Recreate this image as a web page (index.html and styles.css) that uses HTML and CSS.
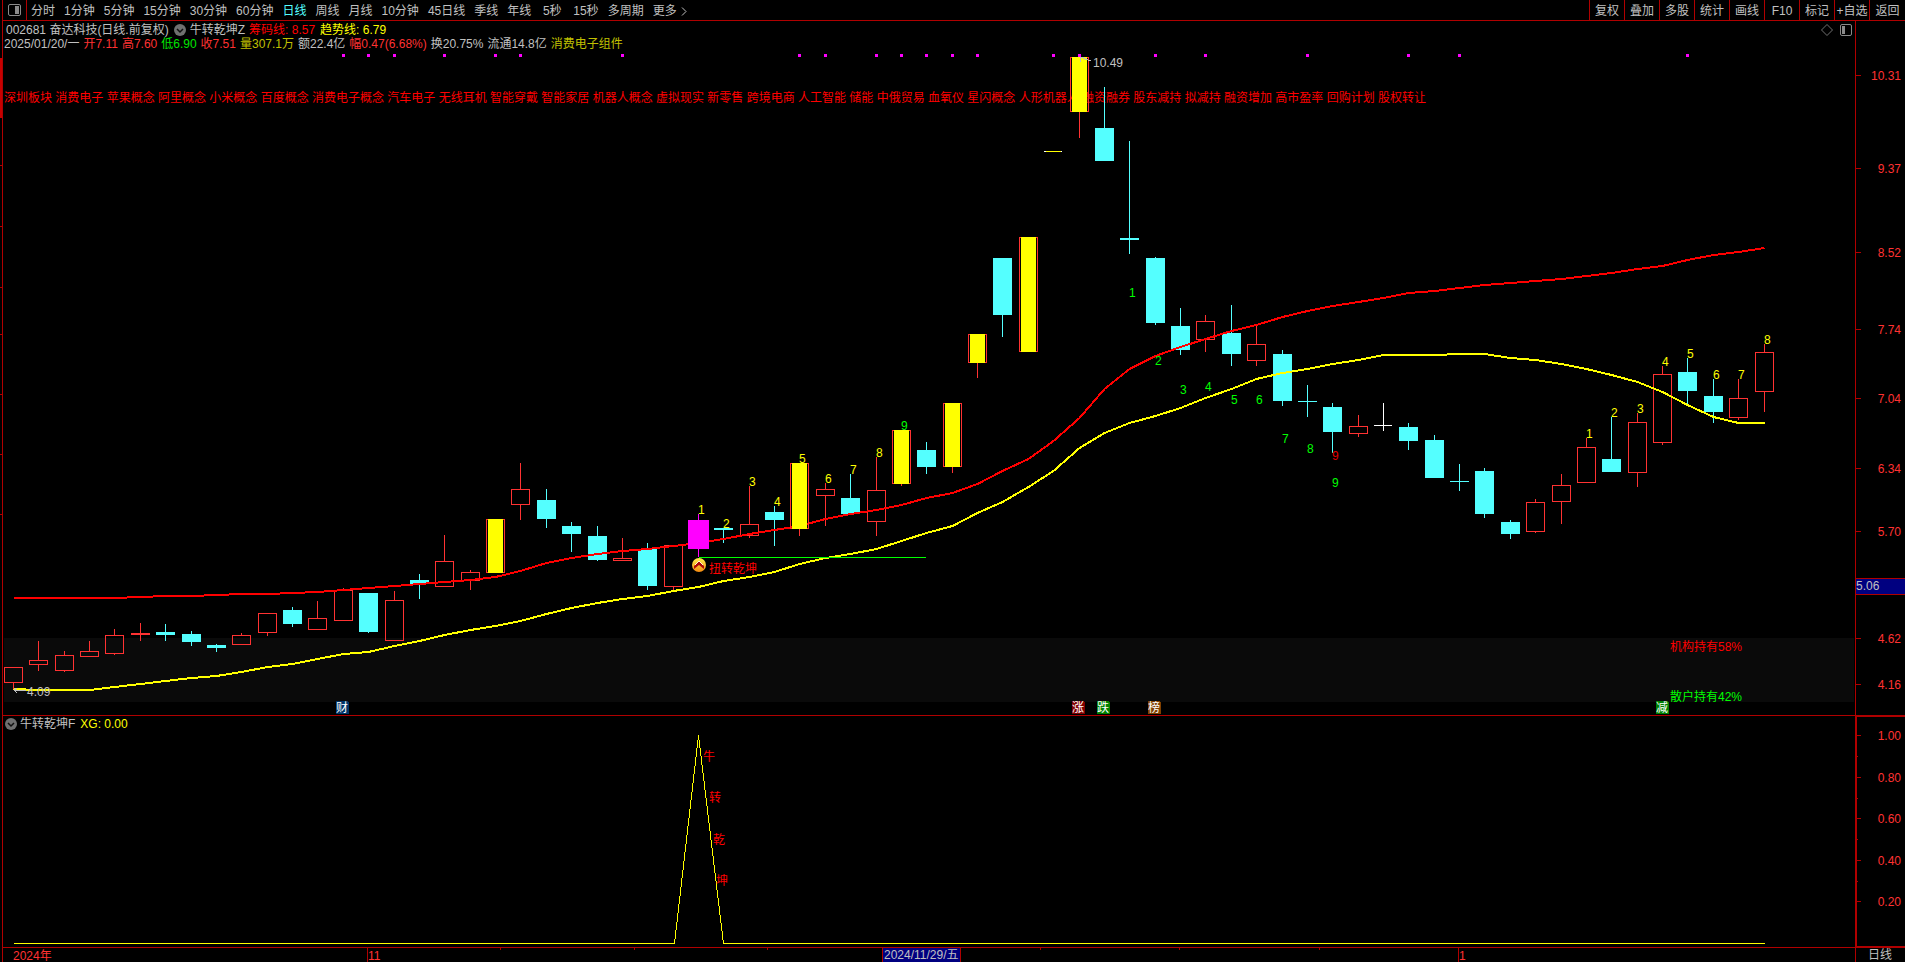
FILE: index.html
```html
<!DOCTYPE html>
<html lang="zh-CN">
<head>
<meta charset="utf-8">
<title>奋达科技 日线</title>
<link rel="stylesheet" href="styles.css">
</head>
<body>
<div class="app">
  <aside class="rail"><svg class="plot" id="rail"></svg></aside>

  <header class="toolbar">
    <button class="layout-btn" aria-label="布局">
      <svg width="13" height="12" viewBox="0 0 13 12"><rect x="0.5" y="0.5" width="12" height="11" rx="1.5" fill="none" stroke="#8a8a8a"/><rect x="7" y="2" width="4" height="8" fill="#8a8a8a"/></svg>
    </button>
    <nav class="periods">
      <button>分时</button><button>1分钟</button><button>5分钟</button><button>15分钟</button><button>30分钟</button><button>60分钟</button><button class="active">日线</button><button>周线</button><button>月线</button><button>10分钟</button><button>45日线</button><button>季线</button><button>年线</button><button>5秒</button><button>15秒</button><button>多周期</button><button class="more">更多<svg width="6" height="9" viewBox="0 0 6 9"><path d="M1 0.5L5 4.5L1 8.5" fill="none" stroke="#c0c0c0"/></svg></button>
    </nav>
    <div class="actions">
      <button>复权</button><button>叠加</button><button>多股</button><button>统计</button><button>画线</button><button>F10</button><button>标记</button><button>+自选</button><button>返回</button>
    </div>
  </header>

  <main class="panel price">
    <svg class="plot" id="price"></svg>
    <div class="legend">
      <div class="row row-title">
        <span>002681 奋达科技(日线.前复权)</span>
        <button class="fold" aria-label="指标菜单"><svg width="12" height="12" viewBox="0 0 12 12"><circle cx="6" cy="6" r="6" fill="#707070"/><path d="M3 5L6 8L9 5" fill="none" stroke="#101010" stroke-width="1.5"/></svg></button>
        <span class="name">牛转乾坤Z</span>
        <span class="red">筹码线: 8.57</span>
        <span class="yellow">趋势线: 6.79</span>
        <div class="tools">
          <button aria-label="标记"><svg width="12" height="12" viewBox="0 0 12 12"><path d="M6 0.5L11.5 6L6 11.5L0.5 6Z" fill="none" stroke="#707070"/></svg></button>
          <button aria-label="侧栏"><svg width="12" height="12" viewBox="0 0 12 12"><rect x="0.5" y="0.5" width="11" height="11" rx="1.5" fill="none" stroke="#8a8a8a"/><rect x="2" y="2" width="3" height="8" fill="#8a8a8a"/></svg></button>
        </div>
      </div>
      <div class="row row-quote">
        <span>2025/01/20/一</span>
        <span class="up">开7.11</span>
        <span class="up">高7.60</span>
        <span class="down">低6.90</span>
        <span class="up">收7.51</span>
        <span class="olive">量307.1万</span>
        <span>额22.4亿</span>
        <span class="up">幅0.47(6.68%)</span>
        <span>换20.75%</span>
        <span>流通14.8亿</span>
        <span class="olive">消费电子组件</span>
      </div>
    </div>
  </main>
  <aside class="axis price-axis"><svg class="plot" id="priceAxis"></svg></aside>

  <section class="panel signal">
    <svg class="plot" id="signal"></svg>
    <div class="legend">
      <div class="row row-signal">
        <button class="fold" aria-label="指标菜单"><svg width="12" height="12" viewBox="0 0 12 12"><circle cx="6" cy="6" r="6" fill="#707070"/><path d="M3 5L6 8L9 5" fill="none" stroke="#101010" stroke-width="1.5"/></svg></button>
        <span>牛转乾坤F</span>
        <span class="yellow value">XG: 0.00</span>
      </div>
    </div>
  </section>
  <aside class="axis signal-axis"><svg class="plot" id="signalAxis"></svg></aside>

  <footer class="dates"><svg class="plot" id="dates"></svg></footer>
  <div class="period-label">日线</div>
</div>
<script src="script.js"></script>
</body>
</html>
```

FILE: styles.css
```css
* { box-sizing: border-box; }

body {
  margin: 0;
  background: #000;
  color: #c0c0c0;
  font: 12px/14px "Liberation Sans", "Noto Sans CJK SC", sans-serif;
}

button {
  margin: 0;
  padding: 0;
  border: 0;
  background: none;
  color: inherit;
  font: inherit;
  cursor: pointer;
  white-space: nowrap;
}

svg { display: block; }

.app {
  display: grid;
  grid-template-columns: 3px minmax(0, 1fr) 50px;
  grid-template-rows: 21px minmax(0, 694fr) minmax(0, 232fr) 15px;
  height: 100vh;
  overflow: hidden;
}

.rail {
  grid-row: 1 / -1;
  border-right: 1px solid #b00000;
}

.toolbar {
  grid-column: 2 / -1;
  display: flex;
  align-items: stretch;
  border-bottom: 1px solid #b00000;
}

.layout-btn {
  width: 24px;
  padding-left: 5px;
  border-right: 1px solid #b00000;
}

.periods {
  display: flex;
  gap: 9px;
  padding-left: 4px;
}

.periods button { min-width: 24px; padding-top: 2px; }
.periods .active { color: #54ffff; }
.periods .more { display: flex; align-items: center; gap: 4px; }

.actions {
  display: flex;
  margin-left: auto;
}

.actions button {
  width: 35px;
  padding-top: 2px;
  border-left: 1px solid #b00000;
}

.actions button:last-child { width: 36px; }

.panel {
  display: grid;
  min-width: 0;
  min-height: 0;
}

.panel > * { grid-area: 1 / 1; }

.plot {
  width: 100%;
  height: 100%;
  overflow: hidden;
  shape-rendering: crispEdges;
}

.signal { border-top: 1px solid #b00000; }

.legend { padding-top: 2px; }
.signal .legend { padding-top: 1px; }

.row {
  display: flex;
  align-items: center;
  height: 14px;
  white-space: nowrap;
}

.row-title { padding-left: 3px; }
.row-title .fold { margin-left: 5px; }
.row-title .name { margin: 0 4px; }
.row-title .yellow { margin-left: 5px; }
.row-quote { gap: 4px; padding-left: 1px; }
.row-signal { gap: 3px; padding-left: 2px; }
.row-signal .value { margin-left: 2px; }

.tools {
  display: flex;
  gap: 7px;
  margin-left: auto;
  padding-right: 3px;
}

.red { color: #ff0000; }
.yellow { color: #ffff00; }
.up { color: #ff3232; }
.down { color: #00e600; }
.olive { color: #c0c000; }

.axis { border-left: 1px solid #b00000; }

.signal-axis {
  border: solid #b00000;
  border-width: 2px 0 1px 2px;
}

.dates {
  grid-column: 2;
  border-top: 1px solid #b00000;
}

.period-label {
  padding-left: 12px;
  border-top: 1px solid #b00000;
  border-left: 1px solid #b00000;
}
```

FILE: script.js
```javascript
const RED = '#ff3232', CYAN = '#54ffff', YELLOW = '#ffff00', GREY = '#c0c0c0', LINE = '#b00000';

// Each bar: [kind, body top, body bottom, high, low] in plot units.
// r hollow up, c filled down, y limit-up, m signal, d flat, w doji
const bars = [
  ['r',667,683,667,689],['r',660,665,641,671],['r',655,671,651,672],['r',651,657,641,657],['r',635,654,629,655],
  ['r',633,635,623,641],['c',632,635,624,641],['c',634,642,631,646],['c',645,648,644,652],['r',635,645,633,645],
  ['r',613,633,613,636],['c',610,624,607,627],['r',618,630,601,630],['r',590,621,588,621],['c',593,632,593,633],
  ['r',600,641,591,641],['c',580,584,574,599],['r',561,587,535,587],['r',572,581,570,590],['y',519,573,519,573],
  ['r',489,505,463,520],['c',500,519,489,528],['c',526,534,522,552],['c',536,560,526,561],['r',558,561,538,561],
  ['c',549,586,543,590],['r',545,587,545,591],['m',520,549,514,557],['c',528,530,528,543],['r',524,536,486,538],
  ['c',512,520,506,546],['y',463,529,463,536],['r',489,496,483,526],['c',498,514,474,514],['r',490,522,457,536],
  ['y',430,484,430,486],['c',450,467,442,474],['y',403,467,403,473],['y',334,363,334,378],['c',258,315,258,337],
  ['y',237,352,237,352],['d',151,152,151,152],['y',57,112,57,138],['c',128,161,87,161],['c',238,240,141,254],
  ['c',258,323,257,325],['c',326,350,308,355],['r',321,340,315,352],['c',333,354,305,366],['r',344,361,325,366],
  ['c',354,401,350,406],['c',401,402,385,417],['c',407,432,403,453],['r',426,434,415,437],['w',425,426,403,431],
  ['c',427,441,423,450],['c',440,478,435,478],['c',481,482,464,491],['c',471,514,468,518],['c',522,534,520,539],
  ['r',502,532,499,533],['r',485,502,474,524],['r',447,483,438,483],['c',459,472,417,472],['r',422,473,413,487],
  ['r',374,443,366,445],['c',372,391,358,405],['c',396,412,379,423],['r',398,418,379,420],['r',352,392,344,412]
];

const chipLine = [598,598,598,598,598,597,596,596,595,594,594,593,592,590,588,586,584,582,580,577,571,563,558,554,551,
  549,546,543,539,534,530,526,519,514,510,505,498,493,484,471,459,441,418,389,369,356,347,339,331,325,
  317,311,306,302,298,293,291,288,285,283,281,279,276,273,269,266,260,255,252,248];
const trendLine = [689,690,690,690,687,684,681,678,676,672,667,664,659,654,652,646,641,635,630,626,621,614,608,603,599,
  596,591,587,581,577,572,564,558,554,549,541,533,526,513,502,487,471,448,433,423,416,408,398,389,379,
  373,369,364,360,355,355,355,354,354,358,360,364,369,375,382,392,405,417,423,423];

const marks = [13,14,15,17,19,20,24,31,32,34,35,36,37,38,41,42,45,47,51,55,57,66];
const countsUp = { 27:1, 28:2, 29:3, 30:4, 31:5, 32:6, 33:7, 34:8, 35:9, 62:1, 63:2, 64:3, 65:4, 66:5, 67:6, 68:7, 69:8 };
const countsDown = [[44,1,297],[45,2,365],[46,3,394],[47,4,391],[48,5,404],[49,6,404],[50,7,443],[51,8,453],[52,9,487]];
const badges = [[336,'财','#003468'],[1072,'涨','#800000'],[1097,'跌','#008000'],[1148,'榜','#804000'],[1656,'减','#008000']];
const concepts = '深圳板块 消费电子 苹果概念 阿里概念 小米概念 百度概念 消费电子概念 汽车电子 无线耳机 智能穿戴 智能家居 机器人概念 虚拟现实 新零售 跨境电商 人工智能 储能 中俄贸易 血氧仪 星闪概念 人形机器人 融资融券 股东减持 拟减持 融资增加 高市盈率 回购计划 股权转让';

const barX = i => Math.floor(13.5 + 25.37 * i);

// A surface maps plot units onto the current size of its svg.
function surface(id, x0, y0, w, h) {
  const svg = document.getElementById(id);
  const box = svg.getBoundingClientRect();
  const X = v => Math.round((v - x0) * (w ? box.width / w : 1));
  const Y = v => Math.round((v - y0) * box.height / h);
  const out = [];
  return {
    X, Y, out,
    rect(x, y, rw, rh, fill) {
      out.push(`<rect x="${x}" y="${y}" width="${rw}" height="${rh}" fill="${fill}"/>`);
    },
    text(x, y, s, fill, extra = '') {
      out.push(`<text x="${x}" y="${y}" fill="${fill}" ${extra}>${s}</text>`);
    },
    poly(pts, stroke, width) {
      const off = width % 2 ? 0.5 : 0;
      out.push(`<polyline points="${pts.map(p => `${X(p[0]) + 0.5},${Y(p[1]) + off}`).join(' ')}" fill="none" stroke="${stroke}" stroke-width="${width}"/>`);
    },
    done() { svg.innerHTML = out.join(''); }
  };
}

function drawBar(s, bar, i) {
  const [kind, top, bottom, high, low] = bar;
  const x = s.X(barX(i)), t = s.Y(top), b = s.Y(bottom), hi = s.Y(high), lo = s.Y(low);
  const bh = Math.max(1, b - t);
  if (kind === 'd') {
    s.rect(x - 9, t, 18, 1, '#ffffff');
    s.rect(x - 7, t, 15, 1, YELLOW);
    return;
  }
  const color = { r: RED, y: RED, c: CYAN, m: '#ff00ff', w: '#ffffff' }[kind];
  if (hi < t) s.rect(x, hi, 1, t - hi, color);
  if (lo > b) s.rect(x, b, 1, lo - b, color);
  if (kind === 'r' || kind === 'y') {
    s.out.push(`<rect x="${x - 8.5}" y="${t + 0.5}" width="18" height="${bh - 1}" fill="none" stroke="${RED}"/>`);
    if (kind === 'y') s.rect(x - 7, t, 15, bh, YELLOW);
  } else if (kind === 'm') {
    s.rect(x - 10, t, 21, bh, color);
  } else {
    s.rect(x - 9, t, kind === 'w' ? 18 : 19, bh, color);
  }
}

function drawPrice() {
  const s = surface('price', 3, 21, 1852, 694);
  const { X, Y } = s;
  s.rect(1, Y(638), X(1854) - 1, Y(702) - Y(638), '#0a0a0a');
  s.text(1, Y(102), concepts, '#ff0000');
  marks.forEach(i => s.rect(X(barX(i)) - 1, Y(54), 3, 3, '#ff00ff'));
  const isTopmost = b => b[0] === 'y' || b[0] === 'm';
  bars.forEach((b, i) => { if (!isTopmost(b)) drawBar(s, b, i); });
  s.poly(chipLine.map((v, i) => [barX(i), v]), '#ff0000', 2);
  s.poly(trendLine.map((v, i) => [barX(i), v]), YELLOW, 2);
  bars.forEach((b, i) => { if (isTopmost(b)) drawBar(s, b, i); });
  s.rect(X(699), Y(557), X(926) - X(699), 1, '#00ff00');

  for (const i in countsUp) {
    s.text(X(barX(+i)), Y(bars[i][3]), countsUp[i], countsUp[i] === 9 ? '#00ff00' : YELLOW);
  }
  countsDown.forEach(([i, n, y]) => s.text(X(barX(i)), Y(y), n, '#00ff00'));
  s.text(X(barX(52)), Y(460), 9, '#e00000');

  const cx = X(699), cy = Y(565);
  s.out.push(`<g shape-rendering="geometricPrecision" transform="translate(${cx} ${cy})">
    <defs><linearGradient id="coin" x1="0" y1="0" x2="0" y2="1"><stop offset="0" stop-color="#fff04a"/><stop offset="1" stop-color="#f58a10"/></linearGradient></defs>
    <circle r="7" fill="url(#coin)"/>
    <path d="M-5 1L0 -4L5 1L5 4L0 0L-5 4Z" fill="#b00808"/><path d="M-4 0L0 -4L4 0" fill="none" stroke="#fff6d0"/></g>`);
  s.text(X(709), Y(573), '扭转乾坤', '#ff0000');

  s.out.push(`<path d="M${X(14)} ${Y(690) + 0.5}h12M${X(17)} ${Y(693)}l-3 -3l3 -2" fill="none" stroke="${GREY}"/>`);
  s.text(X(27), Y(696), '4.09', GREY);
  s.out.push(`<path d="M${X(1080)} ${Y(57)}l11 4M${X(1081)} ${Y(62)}l-1 -5l4 0" fill="none" stroke="${GREY}"/>`);
  s.text(X(1093), Y(67), '10.49', GREY);

  s.text(X(1670), Y(651), '机构持有58%', '#ff0000');
  s.text(X(1670), Y(701), '散户持有42%', '#00ff00');
  badges.forEach(([x, ch, fill]) => {
    const bx = X(x), by = Y(701);
    s.out.push(`<path d="M${bx} ${by}h11l2 2v11h-13z" fill="${fill}"/>`);
    s.text(bx, by + 11, ch, '#ffffff');
  });
  s.done();
}

function drawSignal() {
  const s = surface('signal', 3, 716, 1852, 231);
  s.poly([[13,943],[674,943],[698,735],[723,943],[1764,943]], YELLOW, 1);
  [[703,761,'牛'],[709,802,'转'],[713,844,'乾'],[716,885,'坤']].forEach(([x, y, ch]) => s.text(s.X(x), s.Y(y), ch, '#ff0000'));
  s.done();
}

function drawAxes() {
  const p = surface('priceAxis', 1856, 21, 0, 694);
  [[75,'10.31'],[168,'9.37'],[252,'8.52'],[329,'7.74'],[398,'7.04'],[468,'6.34'],[531,'5.70'],[638,'4.62'],[684,'4.16']].forEach(([y, label]) => {
    p.rect(0, p.Y(y), 5, 1, LINE);
    p.text(45, p.Y(y) + 5, label, RED, 'text-anchor="end"');
  });
  p.rect(0, p.Y(578), 49, 17, LINE);
  p.rect(0, p.Y(578) + 1, 49, 15, '#000080');
  p.text(0, p.Y(578) + 12, '5.06', GREY);
  p.done();

  const q = surface('signalAxis', 1857, 717, 0, 229);
  [[735,'1.00'],[777,'0.80'],[818,'0.60'],[860,'0.40'],[901,'0.20']].forEach(([y, label]) => {
    q.rect(0, q.Y(y), 4, 1, LINE);
    q.text(44, q.Y(y) + 5, label, RED, 'text-anchor="end"');
  });
  [756,798,839,881].forEach(y => q.rect(0, q.Y(y), 1, 1, LINE));
  q.done();

  const r = surface('rail', 0, 0, 0, 962);
  [165,226,287,334,394,454,514].forEach(y => r.rect(0, r.Y(y), 2, 1, LINE));
  r.rect(0, r.Y(58), 2, r.Y(118) - r.Y(58), '#c80000');
  r.done();
}

function drawDates() {
  const s = surface('dates', 3, 948, 1852, 14);
  const { X } = s;
  s.text(X(13), 12, '2024年', RED);
  [[367,'11'],[1458,'1']].forEach(([x, label]) => {
    s.rect(X(x), 0, 1, 14, LINE);
    s.text(X(x) + 1, 12, label, RED);
  });
  [500,634,767,1040,1179,1319].forEach(x => s.rect(X(x), 0, 1, 2, LINE));
  s.rect(X(882), 0, 79, 14, LINE);
  s.rect(X(882) + 1, 0, 77, 14, '#000080');
  s.text(X(882) + 2, 11, '2024/11/29/五', GREY);
  s.done();
}

function draw() {
  drawPrice();
  drawSignal();
  drawAxes();
  drawDates();
}

draw();
window.addEventListener('resize', draw);
```
